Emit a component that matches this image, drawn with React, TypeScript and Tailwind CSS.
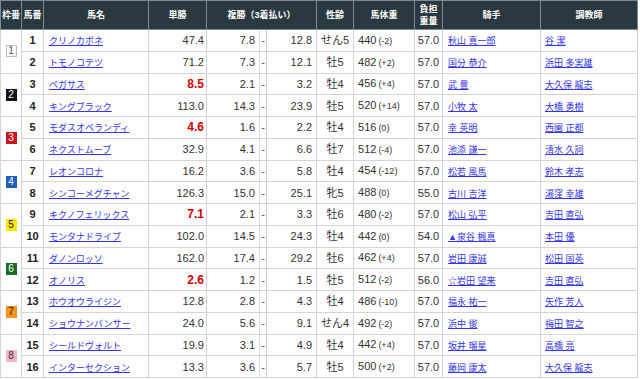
import React from 'react';

type Row = {
  no: number;
  name: string;
  odds: string;
  fav?: boolean;
  pMin: string;
  pMax: string;
  sex: string;
  weight: string;
  diff: string;
  load: string;
  jockey: string;
  trainer: string;
};

const frames = [
  { n: 1, cls: 'bg-white text-[#555] border border-[#bbb]' },
  { n: 2, cls: 'bg-[#111] text-white' },
  { n: 3, cls: 'bg-[#c8161d] text-white' },
  { n: 4, cls: 'bg-[#1d5fbf] text-white' },
  { n: 5, cls: 'bg-[#fde700] text-[#222]' },
  { n: 6, cls: 'bg-[#1d6b26] text-white' },
  { n: 7, cls: 'bg-[#f7941d] text-[#222]' },
  { n: 8, cls: 'bg-[#f5b5c8] text-[#333]' },
];

const rows: Row[] = [
  { no: 1, name: 'クリノカボネ', odds: '47.4', pMin: '7.8', pMax: '12.8', sex: 'せん5', weight: '440', diff: '(-2)', load: '57.0', jockey: '秋山 真一郎', trainer: '谷 潔' },
  { no: 2, name: 'トモノコテツ', odds: '71.2', pMin: '7.3', pMax: '12.1', sex: '牡5', weight: '482', diff: '(+2)', load: '57.0', jockey: '国分 恭介', trainer: '浜田 多実雄' },
  { no: 3, name: 'ペガサス', odds: '8.5', fav: true, pMin: '2.1', pMax: '3.2', sex: '牡4', weight: '456', diff: '(+4)', load: '57.0', jockey: '武 豊', trainer: '大久保 龍志' },
  { no: 4, name: 'キングブラック', odds: '113.0', pMin: '14.3', pMax: '23.9', sex: '牡5', weight: '520', diff: '(+14)', load: '57.0', jockey: '小牧 太', trainer: '大橋 勇樹' },
  { no: 5, name: 'モダスオペランディ', odds: '4.6', fav: true, pMin: '1.6', pMax: '2.2', sex: '牡4', weight: '516', diff: '(0)', load: '57.0', jockey: '幸 英明', trainer: '西園 正都' },
  { no: 6, name: 'ネクストムーブ', odds: '32.9', pMin: '4.1', pMax: '6.6', sex: '牡7', weight: '512', diff: '(-4)', load: '57.0', jockey: '池添 謙一', trainer: '清水 久詞' },
  { no: 7, name: 'レオンコロナ', odds: '16.2', pMin: '3.6', pMax: '5.8', sex: '牡4', weight: '454', diff: '(-12)', load: '57.0', jockey: '松若 風馬', trainer: '鈴木 孝志' },
  { no: 8, name: 'シンコーメグチャン', odds: '126.3', pMin: '15.0', pMax: '25.1', sex: '牝5', weight: '488', diff: '(0)', load: '55.0', jockey: '古川 吉洋', trainer: '湯窪 幸雄' },
  { no: 9, name: 'キクノフェリックス', odds: '7.1', fav: true, pMin: '2.1', pMax: '3.3', sex: '牡6', weight: '480', diff: '(-2)', load: '57.0', jockey: '松山 弘平', trainer: '吉田 直弘' },
  { no: 10, name: 'モンタナドライブ', odds: '102.0', pMin: '14.5', pMax: '24.3', sex: '牡4', weight: '442', diff: '(0)', load: '54.0', jockey: '▲泉谷 楓真', trainer: '本田 優' },
  { no: 11, name: 'ダノンロッソ', odds: '162.0', pMin: '17.4', pMax: '29.2', sex: '牡6', weight: '462', diff: '(+4)', load: '57.0', jockey: '岩田 康誠', trainer: '松田 国英' },
  { no: 12, name: 'オノリス', odds: '2.6', fav: true, pMin: '1.2', pMax: '1.5', sex: '牡5', weight: '512', diff: '(-2)', load: '56.0', jockey: '☆岩田 望来', trainer: '吉田 直弘' },
  { no: 13, name: 'ホウオウライジン', odds: '12.8', pMin: '2.8', pMax: '4.3', sex: '牡4', weight: '486', diff: '(-10)', load: '57.0', jockey: '福永 祐一', trainer: '矢作 芳人' },
  { no: 14, name: 'ショウナンバンサー', odds: '24.0', pMin: '5.6', pMax: '9.1', sex: 'せん4', weight: '492', diff: '(-2)', load: '57.0', jockey: '浜中 俊', trainer: '梅田 智之' },
  { no: 15, name: 'シールドヴォルト', odds: '19.9', pMin: '3.1', pMax: '4.9', sex: '牡4', weight: '442', diff: '(+4)', load: '57.0', jockey: '坂井 瑠星', trainer: '高橋 亮' },
  { no: 16, name: 'インターセクション', odds: '13.3', pMin: '3.6', pMax: '5.7', sex: '牡5', weight: '500', diff: '(+2)', load: '57.0', jockey: '藤岡 康太', trainer: '大久保 龍志' },
];

const th = 'border border-[#7d8a90] bg-[#2a3840] text-white font-bold text-[9px] leading-[12px] text-center p-0';
const td = 'border border-[#d4d4d4] p-0 align-middle text-[11px] leading-[14px]';
const link = 'text-[#3434e8] underline text-[9px] leading-[12px]';

export default function App() {
  return (
    <div className="w-[640px] h-[379px] bg-white overflow-hidden" style={{ fontFamily: '"Liberation Sans", "Noto Sans CJK JP", sans-serif' }}>
      <table className="table-fixed border-collapse w-[638px] text-[#333]">
        <colgroup>
          <col className="w-[21px]" />
          <col className="w-[22px]" />
          <col className="w-[105px]" />
          <col className="w-[58px]" />
          <col className="w-[53px]" />
          <col className="w-[7px]" />
          <col className="w-[50px]" />
          <col className="w-[37px]" />
          <col className="w-[61px]" />
          <col className="w-[28px]" />
          <col className="w-[98px]" />
          <col className="w-[97px]" />
        </colgroup>
        <thead>
          <tr className="h-[29px]">
            <th className={th}>枠番</th>
            <th className={th}>馬番</th>
            <th className={th}>馬名</th>
            <th className={th}>単勝</th>
            <th className={th} colSpan={3}>複勝（3着払い）</th>
            <th className={th}>性齢</th>
            <th className={th}>馬体重</th>
            <th className={`${th} text-[8px] leading-[10px]`}>負担<br />重量</th>
            <th className={th}>騎手</th>
            <th className={th}>調教師</th>
          </tr>
        </thead>
        <tbody>
          {rows.map((r, i) => {
            const f = frames[Math.floor(i / 2)];
            return (
              <tr key={r.no} className="h-[21.75px]">
                {i % 2 === 0 && (
                  <td className={`${td} border-[#cfcfcf]`} rowSpan={2}>
                    <div className="flex justify-center">
                      <span className={`w-[11px] h-[12px] flex items-center justify-center text-[10px] leading-none ${f.cls}`}>{f.n}</span>
                    </div>
                  </td>
                )}
                <td className={`${td} text-center font-bold text-[#222]`}>{r.no}</td>
                <td className={`${td} pl-[5px] whitespace-nowrap`}>
                  <span className={link}>{r.name}</span>
                </td>
                <td className={`${td} text-right pr-[2px] ${r.fav ? 'text-[#d40000] font-bold text-[12px]' : ''}`}>{r.odds}</td>
                <td className={`${td} border-r-[#ddd] border-r-dotted text-right pr-[4px]`}>{r.pMin}</td>
                <td className={`${td} border-x-dotted border-x-[#ccc] text-center text-[9px] text-[#555]`}>-</td>
                <td className={`${td} border-l-dotted border-l-[#ddd] text-right pr-[4px]`}>{r.pMax}</td>
                <td className={`${td} text-center whitespace-nowrap`}>{r.sex}</td>
                <td className={`${td} pl-[4px] whitespace-nowrap`}>
                  <span>{r.weight}</span>
                  <span className="text-[9px] ml-[2px]">{r.diff}</span>
                </td>
                <td className={`${td} text-center`}>{r.load}</td>
                <td className={`${td} pl-[5px] whitespace-nowrap`}>
                  <span className={link}>{r.jockey}</span>
                </td>
                <td className={`${td} pl-[4px] whitespace-nowrap`}>
                  <span className={link}>{r.trainer}</span>
                </td>
              </tr>
            );
          })}
        </tbody>
      </table>
    </div>
  );
}
